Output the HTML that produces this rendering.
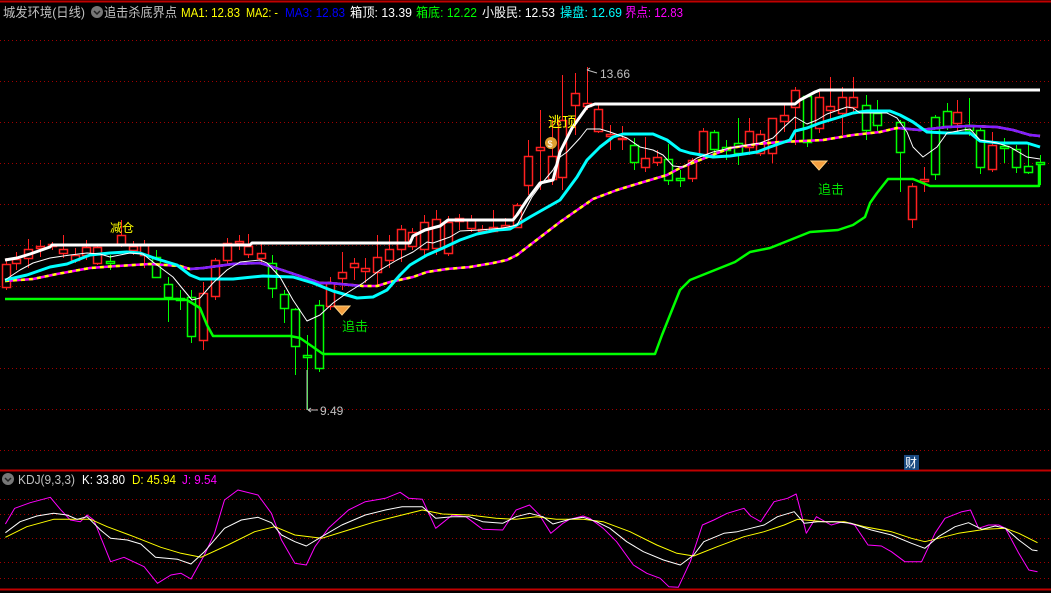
<!DOCTYPE html>
<html><head><meta charset="utf-8">
<style>
html,body{margin:0;padding:0;background:#000;width:1051px;height:593px;overflow:hidden}
svg{display:block}
text{font-family:"Liberation Sans","Noto Sans CJK SC",sans-serif}
</style></head><body>
<svg id="s" width="1051" height="593" viewBox="0 0 1051 593" xmlns="http://www.w3.org/2000/svg">
<rect width="1051" height="593" fill="#000"/>
<g id="grid"></g>
<line x1="0" y1="1.5" x2="1051" y2="1.5" stroke="#c00000" stroke-width="2"/>
<line x1="0" y1="470.5" x2="1051" y2="470.5" stroke="#c00000" stroke-width="2"/>
<line x1="0" y1="589.5" x2="1051" y2="589.5" stroke="#c00000" stroke-width="2"/>
<g font-size="13" lengthAdjust="spacingAndGlyphs">
<text x="3" y="17" fill="#c0c0c0" textLength="82" lengthAdjust="spacingAndGlyphs">城发环境(日线)</text>
<circle cx="97" cy="12" r="6" fill="#777"/><path d="M94 11 l3 3 l3 -3" stroke="#222" stroke-width="1.5" fill="none"/>
<text x="104" y="17" fill="#c0c0c0" textLength="73" lengthAdjust="spacingAndGlyphs">追击杀底界点</text>
<text x="181" y="17" fill="#ffff00" textLength="59" lengthAdjust="spacingAndGlyphs">MA1: 12.83</text>
<text x="246" y="17" fill="#ffff00" textLength="32" lengthAdjust="spacingAndGlyphs">MA2: -</text>
<text x="285" y="17" fill="#0000ff" textLength="60" lengthAdjust="spacingAndGlyphs">MA3: 12.83</text>
<text x="350" y="17" fill="#ffffff" textLength="62" lengthAdjust="spacingAndGlyphs">箱顶: 13.39</text>
<text x="416" y="17" fill="#00ff00" textLength="61" lengthAdjust="spacingAndGlyphs">箱底: 12.22</text>
<text x="482" y="17" fill="#ffffff" textLength="73" lengthAdjust="spacingAndGlyphs">小股民: 12.53</text>
<text x="560" y="17" fill="#00ffff" textLength="62" lengthAdjust="spacingAndGlyphs">操盘: 12.69</text>
<text x="625" y="17" fill="#ff00ff" textLength="58" lengthAdjust="spacingAndGlyphs">界点: 12.83</text>
<circle cx="8" cy="479" r="6" fill="#777"/><path d="M5 478 l3 3 l3 -3" stroke="#222" stroke-width="1.5" fill="none"/>
<text x="18" y="484" fill="#c0c0c0" textLength="57" lengthAdjust="spacingAndGlyphs">KDJ(9,3,3)</text>
<text x="82" y="484" fill="#ffffff" textLength="43" lengthAdjust="spacingAndGlyphs">K: 33.80</text>
<text x="132" y="484" fill="#ffff00" textLength="44" lengthAdjust="spacingAndGlyphs">D: 45.94</text>
<text x="182" y="484" fill="#ff00ff" textLength="35" lengthAdjust="spacingAndGlyphs">J: 9.54</text>
</g>
<g id="chart"></g>
<g font-size="12">
<text x="110" y="232" fill="#ffff00">减仓</text>
<text x="548" y="127" fill="#ffff00" font-size="14">逃顶</text>
<circle cx="551" cy="143" r="6" fill="#e0a030"/><text x="547.5" y="147" fill="#fff" font-size="9">$</text>
<path d="M334 306 h16 l-8 9 z" fill="#f5a040" stroke="#ffd080" stroke-width="1"/>
<path d="M811 161 h16 l-8 9 z" fill="#f5a040" stroke="#ffd080" stroke-width="1"/>
<text x="342" y="331" fill="#00e000" font-size="13">追击</text>
<text x="818" y="194" fill="#00e000" font-size="13">追击</text>
<path d="M587 70 l3 -2 M587 70 l10 3" stroke="#c0c0c0" fill="none"/>
<text x="600" y="78" fill="#c0c0c0">13.66</text>
<line x1="307" y1="370" x2="307" y2="410" stroke="#c0c0c0"/>
<path d="M308 410 h10 M308 410 l3 -2 M308 410 l3 2" stroke="#c0c0c0"/>
<text x="320" y="415" fill="#c0c0c0">9.49</text>
<rect x="904" y="455" width="15" height="15" fill="#1a4a80"/>
<text x="905" y="467" fill="#fff" font-size="12">财</text>
</g>
</svg>
<script>
var NS="http://www.w3.org/2000/svg";
function el(g,t,a){var e=document.createElementNS(NS,t);for(var k in a)e.setAttribute(k,a[k]);g.appendChild(e);return e;}
var grid=document.getElementById('grid');
[40,81,122,163,204,245,286,327,368,409,450,499,514,538,562,578].forEach(function(y){
 el(grid,'line',{x1:0,y1:y+.5,x2:1051,y2:y+.5,stroke:'#a00000','stroke-dasharray':'1 3'});});
var C=document.getElementById('chart');
function pl(pts,col,w,extra){var s=pts.map(function(p){return p[0]+','+p[1]}).join(' ');var a={points:s,fill:'none',stroke:col,'stroke-width':w,'stroke-linejoin':'round'};for(var k in extra)a[k]=extra[k];el(C,'polyline',a);}
var cd=[[6,264,287,258,290,1],[16,259,263,252,270,1],[28,249,258,239,268,1],[40,246,248,240,257,1],[52,244,246,242,250,1],[63,249,253,235,258,1],[75,255,260,248,263,1],[86,247,255,240,260,1],[97,247,263,245,265,1],[110,261,263,255,270,0],[121,235,245,220,247,1],[133,246,250,241,255,1],[144,245,255,240,268,1],[156,257,277,250,278,0],[168,284,297,277,322,0],[180,298,300,290,310,0],[191,297,336,290,343,0],[203,293,340,282,350,1],[215,260,296,258,300,1],[227,243,260,238,265,1],[239,241,243,235,250,1],[248,246,254,234,258,1],[261,253,258,243,262,1],[272,263,288,255,298,0],[284,294,308,290,323,0],[295,309,346,308,375,0],[307,355,357,335,410,0],[319,305,368,300,372,0],[330,283,306,277,310,1],[342,272,278,252,290,1],[354,263,267,258,280,1],[365,268,271,258,283,1],[377,257,272,235,285,1],[389,249,260,235,268,1],[401,229,249,225,262,1],[412,232,246,228,250,1],[424,222,249,215,258,1],[436,219,248,210,255,1],[448,222,253,216,256,1],[459,218,221,214,230,1],[471,219,228,215,232,1],[482,229,231,225,234,1],[493,227,231,210,232,1],[505,225,227,218,230,1],[517,205,227,203,228,1],[528,156,185,140,195,1],[540,147,150,110,190,1],[552,156,179,120,185,1],[562,120,177,75,190,1],[575,93,105,73,135,1],[587,103,106,67,110,1],[598,109,131,105,133,1],[610,134,136,125,150,1],[622,138,139,126,150,1],[634,145,162,138,170,0],[645,158,167,137,172,1],[657,157,162,150,166,1],[668,159,180,144,185,0],[680,178,180,170,187,0],[692,160,178,158,182,1],[703,131,154,128,158,1],[714,132,149,130,155,0],[726,147,150,140,160,0],[738,143,153,118,165,0],[749,131,147,118,155,1],[760,134,153,130,156,1],[772,118,153,118,163,1],[784,115,121,105,132,1],[795,90,107,87,145,1],[807,96,142,95,147,0],[819,97,128,92,133,1],[830,106,110,77,120,1],[842,97,113,87,135,1],[853,97,107,77,112,1],[866,105,130,95,140,0],[877,113,125,100,133,0],[900,122,152,120,192,0],[912,186,219,183,228,1],[924,179,181,167,192,1],[935,117,174,115,180,0],[947,111,126,103,130,0],[957,112,123,100,132,1],[969,125,130,98,136,0],[980,130,167,128,174,0],[992,145,169,132,172,1],[1004,146,148,138,163,0],[1016,149,167,145,173,0],[1028,166,172,143,174,0],[1040,162,164,155,185,0]];
var cg=el(C,'g',{});
cd.forEach(function(c){var col=c[5]?'#ff2020':'#00ff00';
 el(cg,'line',{x1:c[0]+.5,y1:c[3],x2:c[0]+.5,y2:c[4],stroke:col});
 var h=Math.max(c[2]-c[1],1);
 el(cg,'rect',{x:c[0]-3.5,y:c[1]+.5,width:8,height:h,fill:'#000',stroke:col,'stroke-width':1.5});});
pl([[5,260],[17,258],[30,254],[50,247],[52,245],[250,245],[252,243],[410,243],[413,236],[425,230],[440,226],[448,220],[513,220],[517,215],[527,200],[540,183],[553,180],[560,152],[572,128],[587,107],[595,104],[795,104],[800,100],[815,92],[820,90],[1040,90]],'#ffffff',3);
pl([[5,299],[177,299],[187,300],[200,308],[207,325],[213,336],[290,336],[300,338],[313,347],[323,354],[655,354],[662,335],[670,315],[680,290],[690,280],[700,276],[715,270],[735,262],[750,252],[770,248],[790,240],[810,232],[838,230],[853,225],[865,217],[870,203],[877,193],[888,179],[913,179],[930,186],[1039,186],[1039,165]],'#00ff00',2.5);
var slow=[[5,281],[33,279],[57,274],[90,268],[117,266],[150,264],[180,266],[190,269],[203,268],[233,264],[260,263],[273,267],[300,276],[320,283],[330,283],[363,286],[377,286],[390,282],[413,277],[427,272],[447,269],[470,267],[493,263],[507,260],[517,255],[530,245],[560,222],[593,199],[617,190],[640,183],[667,175],[680,168],[700,160],[730,148],[757,144],[780,142],[803,141],[823,140],[853,135],[880,132],[897,128],[920,130],[947,127],[970,126],[997,127],[1013,130],[1030,135],[1040,136]];
pl(slow,'#ff00ff',2.5);
pl(slow,'#ffff00',2.5,{'stroke-dasharray':'4 4'});
pl([[190,269],[203,268],[233,264],[260,263],[273,267],[300,276],[320,283],[330,283],[360,286]],'#8020ff',2.5);
pl([[900,128],[920,130],[947,127],[970,126],[997,127],[1013,130],[1030,135],[1040,136]],'#8020ff',2.5);
pl([[5,280],[27,275],[50,267],[67,264],[90,255],[110,253],[127,252],[140,253],[157,259],[177,265],[190,275],[200,279],[233,279],[263,276],[293,277],[313,283],[333,291],[357,298],[373,297],[387,290],[400,275],[410,265],[427,255],[443,248],[460,240],[477,234],[497,230],[510,229],[520,223],[530,217],[560,200],[577,177],[587,160],[600,147],[613,137],[623,134],[653,134],[667,140],[680,150],[690,153],[713,157],[730,156],[757,152],[770,147],[790,140],[795,131],[807,128],[820,123],[840,117],[853,113],[867,111],[890,111],[900,115],[913,122],[927,132],[947,133],[970,133],[980,141],[1000,143],[1027,143],[1040,147]],'#00ffff',3);
pl([[5,280],[20,270],[33,263],[50,258],[70,255],[87,253],[100,254],[110,257],[130,253],[143,254],[153,262],[173,277],[182,288],[192,300],[200,298],[213,283],[227,270],[240,262],[260,260],[267,263],[280,277],[293,300],[307,321],[320,315],[333,303],[347,293],[363,283],[380,270],[397,260],[413,252],[427,242],[433,243],[450,237],[460,231],[480,230],[503,228],[517,225],[532,197],[543,182],[553,170],[560,157],[567,152],[580,138],[587,129],[600,129],[610,132],[627,138],[640,147],[653,150],[663,155],[673,166],[683,167],[697,158],[713,152],[730,148],[747,145],[760,143],[773,138],[783,128],[795,117],[807,124],[817,120],[827,114],[847,107],[853,108],[860,113],[887,113],[897,118],[907,132],[913,147],[923,157],[937,147],[947,133],[963,130],[970,129],[980,140],[997,143],[1010,147],[1027,157],[1040,159]],'#ffffff',1);
function kz(a){return a.map(function(p){return [(p[0]/1.492).toFixed(1),(470+p[1]/3).toFixed(1)]});}
var J=[[8,162],[22,115],[45,98],[75,82],[90,118],[105,150],[120,155],[130,135],[140,150],[165,275],[185,262],[215,290],[235,340],[255,315],[270,310],[285,327],[305,255],[320,190],[335,90],[355,60],[385,75],[405,130],[420,210],[440,280],[457,285],[470,230],[490,175],[520,120],[545,95],[575,85],[597,67],[610,85],[630,88],[650,175],[675,135],[695,140],[720,178],[750,180],[770,120],[790,105],[805,135],[822,190],[840,160],[850,148],[870,138],[880,145],[900,175],[920,215],[945,285],[965,310],[985,325],[998,350],[1012,352],[1030,275],[1048,165],[1065,150],[1085,130],[1110,115],[1120,138],[1135,155],[1155,95],[1175,85],[1188,72],[1203,190],[1218,140],[1240,165],[1258,155],[1275,165],[1295,225],[1315,228],[1330,245],[1350,275],[1375,275],[1395,190],[1410,145],[1435,125],[1448,120],[1460,175],[1475,165],[1490,165],[1500,175],[1520,250],[1535,300],[1548,305]];
var K=[[8,188],[30,155],[55,138],[80,130],[100,135],[115,148],[130,140],[150,180],[165,205],[190,210],[210,222],[232,262],[265,268],[285,282],[305,245],[335,175],[360,150],[385,142],[405,158],[420,195],[440,215],[457,228],[480,200],[510,165],[545,135],[575,120],[600,110],[630,110],[650,145],[675,140],[700,140],[720,155],[750,160],[770,140],[790,130],[810,140],[825,162],[850,148],[870,142],[890,155],[910,175],[935,215],[960,245],[990,270],[1015,285],[1035,255],[1050,215],[1080,190],[1100,185],[1120,175],[1140,165],[1160,140],[1185,125],[1200,160],[1220,155],[1245,155],[1270,160],[1300,180],[1330,195],[1360,220],[1380,235],[1400,200],[1425,170],[1445,158],[1465,178],[1485,168],[1500,175],[1520,210],[1540,240],[1548,242]];
var D=[[8,202],[40,170],[80,148],[110,148],[135,148],[160,170],[200,200],[240,232],[270,250],[300,262],[340,225],[380,185],[410,170],[440,195],[480,205],[520,180],[560,155],[600,135],[630,120],[660,132],[700,135],[740,145],[770,148],[800,140],[830,148],[870,148],[900,155],[940,185],[980,225],[1010,250],[1035,258],[1070,230],[1110,200],[1140,185],[1170,165],[1190,148],[1230,155],[1260,155],[1290,170],[1330,185],[1360,205],[1380,215],[1400,205],[1430,190],[1470,178],[1500,175],[1520,190],[1548,218]];
pl(kz(J),'#ff00ff',1);pl(kz(D),'#ffff00',1);pl(kz(K),'#ffffff',1);
</script>
</body></html>
